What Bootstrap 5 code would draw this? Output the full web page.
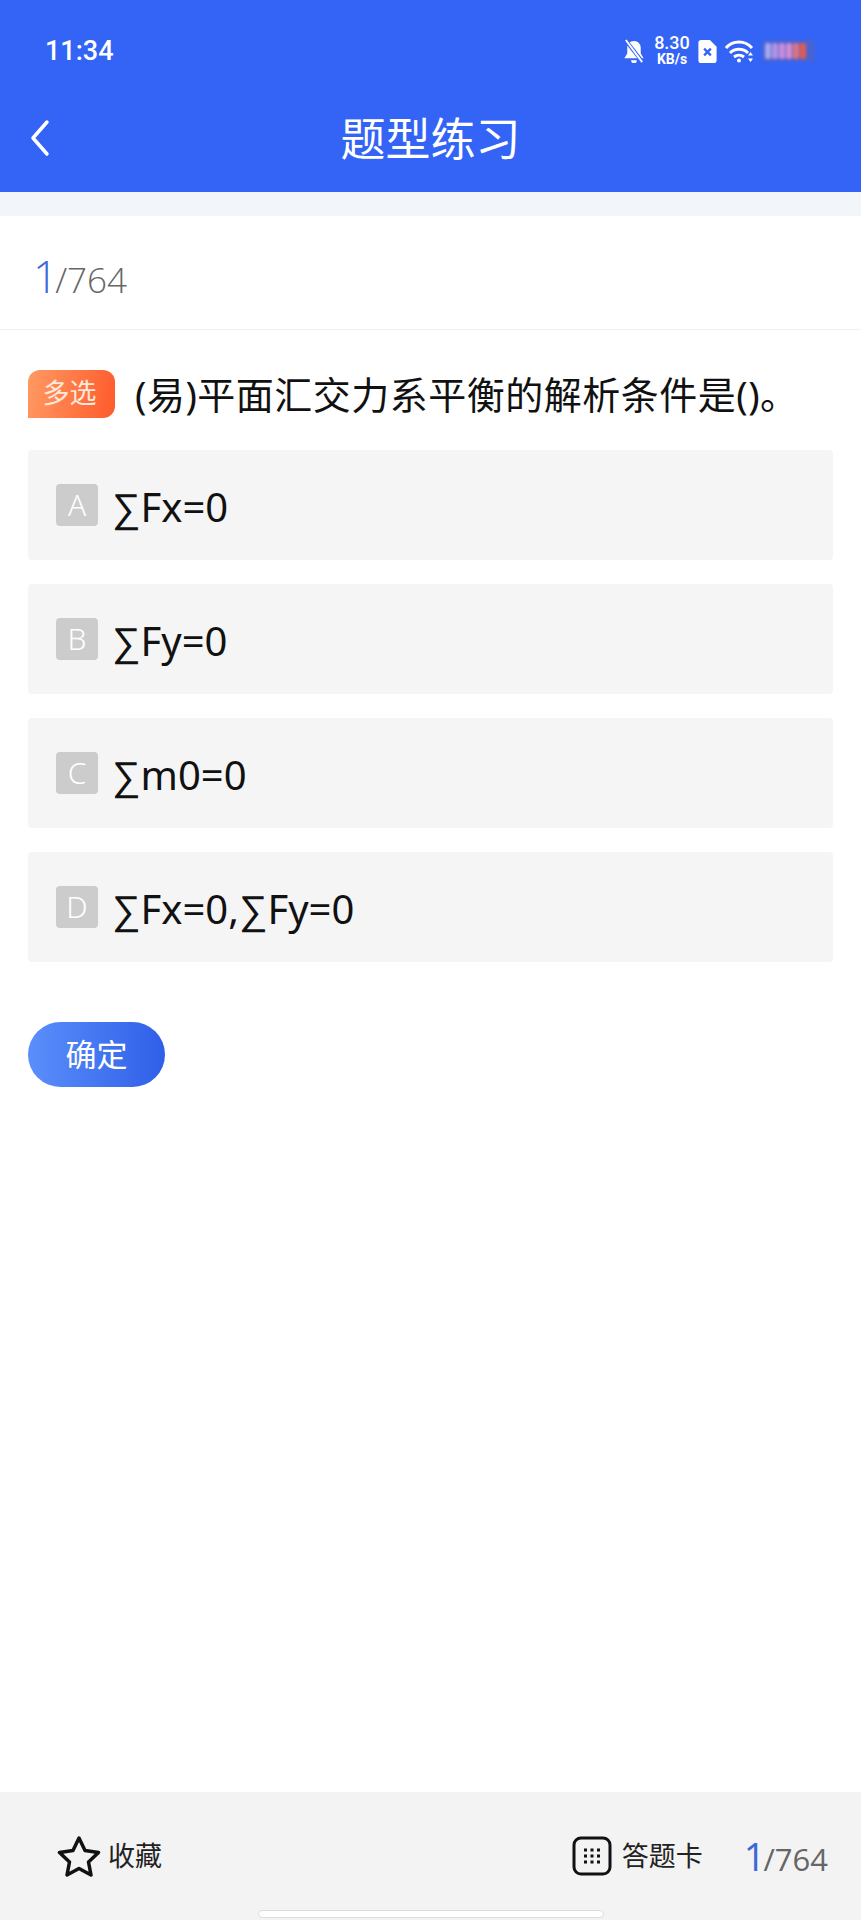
<!DOCTYPE html>
<html lang="zh-CN">
<head>
    <meta charset="UTF-8">
    <meta name="viewport" content="width=device-width, initial-scale=1.0">
    <title>题型练习</title>
    <link href="https://cdn.jsdelivr.net/npm/bootstrap@5.3.0/dist/css/bootstrap.min.css" rel="stylesheet">
    <style>
        body { font-family: "Noto Sans", "Noto Sans CJK SC", sans-serif; background: #fff; }
        .screen { height: 1920px; width: 861px; overflow: hidden; }
        .app-head { background: #3364f6; height: 192px; color: #fff; }
        .status-row { height: 100px; padding: 2px 46px 0 45px; }
        .clock { font-family: Roboto, sans-serif; font-size: 27px; font-weight: 500; }
        .status-icons { gap: 8px; }
        .speed { font-family: Roboto, sans-serif; font-size: 18px; font-weight: 500; line-height: 16px; text-align: center; width: 36px; }
        .speed small { display: block; font-size: 14px; font-weight: 700; white-space: nowrap; }
        .batt { width: 53px; height: 22px; border-radius: 5px; background: #4a63d4; filter: blur(1.5px); gap: 1px; padding: 3px 9px 3px 3px; }
        .batt i { flex: 1; border-radius: 2px; }
        .title-row { height: 92px; padding-bottom: 16px; }
        .back-btn { position: absolute; left: 28px; top: 19px; }
        .title-text { font-size: 45px; line-height: 1; }
        .strip { height: 24px; background: #f2f5f9; }
        .count-row { height: 114px; padding-left: 33px; border-bottom: 1px solid #f2f2f2; color: #666; font-family: "Open Sans", sans-serif; font-size: 35px; font-weight: 300; padding-top: 6px; }
        .count-now { color: #3a68d8; font-size: 44px; margin-right: -3px; }
        .q-row { padding: 40px 28px 0; height: 120px; }
        .q-tag { width: 87px; height: 48px; flex: none; border-radius: 12px 12px 12px 0; background: linear-gradient(100deg, #ff9a63, #ff5a2b); color: #ffe9dc; font-size: 27px; line-height: 46px; text-align: center; padding-right: 4px; }
        .q-text { font-size: 38px; line-height: 48px; letter-spacing: .5px; color: #111; margin-left: 20px; white-space: nowrap; }
        .opt-list { padding: 0 28px; gap: 24px; }
        .opt-row { height: 110px; background: #f5f5f6; border-radius: 4px; padding-left: 28px; padding-top: 34px; }
        .opt-key { width: 42px; height: 42px; border-radius: 4px; background: #cccccd; color: #fff; font-size: 30px; font-weight: 300; line-height: 42px; text-align: center; flex: none; }
        .opt-text { font-family: "Noto Sans", "Liberation Sans", sans-serif; font-size: 40px; line-height: 42px; color: #111; margin-left: 14px; padding-top: 2px; }
        .ok-btn { width: 137px; height: 65px; border: 0; border-radius: 33px; margin: 60px 0 0 28px; background: linear-gradient(90deg, #5a8ffb, #2f5fe8); color: #fff; font-size: 31px; padding: 0; }
        .foot { height: 128px; background: #f3f3f3; padding: 0 33px 0 57px; color: #222; font-size: 27px; margin-top: auto; position: relative; }
        .foot-gap { gap: 7px; }
        .card-label { margin: 0 41px 0 10px; }
        .foot-count { color: #666; font-family: "Open Sans", sans-serif; font-size: 31px; font-weight: 400; }
        .foot-count b { color: #3a68d8; font-size: 38px; font-weight: 400; margin-right: -2px; }
        .home-bar { position: absolute; left: 258px; top: 118px; width: 346px; height: 8px; background: #fff; border: 1px solid #ddd; border-radius: 4px; }
    </style>
</head>
<body>
<div class="screen d-flex flex-column">

    <header class="app-head">
        <div class="status-row d-flex align-items-center justify-content-between">
            <span class="clock">11:34</span>
            <div class="status-icons d-flex align-items-center">
                <svg width="24" height="25" viewBox="0 0 22 26" fill="#fff">
                    <path d="M11 2c4 0 7 3 7 7v6l3 5H1l3-5V9c0-4 3-7 7-7zM8 22h6a3 3 0 0 1-6 0z"/>
                    <path d="M2 1l18 23" stroke="#3364f6" stroke-width="4"/>
                    <path d="M2.500 1l17 23" stroke="#fff" stroke-width="2"/>
                </svg>
                <div class="speed">8.30<small>KB/s</small></div>
                <svg width="19" height="23" viewBox="0 0 19 24">
                    <path d="M3 0h9l7 7v14a3 3 0 0 1-3 3H3a3 3 0 0 1-3-3V3a3 3 0 0 1 3-3z" fill="#fff"/>
                    <path d="M6 9l7 7M13 9l-7 7" stroke="#3364f6" stroke-width="2.500"/>
                </svg>
                <svg width="29" height="23" viewBox="0 0 29 23" fill="none" stroke="#fff" stroke-width="3">
                    <path d="M1 8c7-8 19-8 26 0M5 13c5-5 13-5 18 0M9 17c3-2.500 7-2.500 10 0"/>
                    <circle cx="14" cy="20.500" r="2" fill="#fff" stroke="none"/>
                    <path d="M25.500 12l-2.500 3.500h5zM25.500 22l-2.500-3.500h5z" fill="#fff" stroke="none"/>
                </svg>
                <div class="batt d-flex">
                    <i style="background:#a6a9ec"></i>
                    <i style="background:#b593e2"></i>
                    <i style="background:#c78fdc"></i>
                    <i style="background:#d48dd0"></i>
                    <i style="background:#e2727e"></i>
                    <i style="background:#e25c50"></i>
                </div>
            </div>
        </div>
        <div class="title-row position-relative d-flex align-items-center justify-content-center">
            <svg class="back-btn" width="24" height="38" viewBox="0 0 24 38" fill="none" stroke="#fff" stroke-width="3.500" stroke-linecap="round" stroke-linejoin="round">
                <path d="M19 3L5 19l14 16"/>
            </svg>
            <span class="title-text">题型练习</span>
        </div>
    </header>

    <div class="strip"></div>

    <div class="count-row d-flex align-items-center"><span><span class="count-now">1</span>/764</span></div>

    <div class="q-row d-flex align-items-start">
        <span class="q-tag">多选</span>
        <span class="q-text">(易)平面汇交力系平衡的解析条件是()。</span>
    </div>

    <div class="opt-list d-flex flex-column">
        <div class="opt-row d-flex align-items-start"><span class="opt-key">A</span><span class="opt-text">∑Fx=0</span></div>
        <div class="opt-row d-flex align-items-start"><span class="opt-key">B</span><span class="opt-text">∑Fy=0</span></div>
        <div class="opt-row d-flex align-items-start"><span class="opt-key">C</span><span class="opt-text">∑m0=0</span></div>
        <div class="opt-row d-flex align-items-start"><span class="opt-key">D</span><span class="opt-text">∑Fx=0,∑Fy=0</span></div>
    </div>

    <div><button type="button" class="btn ok-btn">确定</button></div>

    <footer class="foot d-flex align-items-center justify-content-between">
        <div class="foot-gap d-flex align-items-center">
            <svg width="44" height="42" viewBox="0 0 44 42" fill="none" stroke="#111" stroke-width="3.500" stroke-linejoin="round">
                <path d="M22 3l6 12.500 13.500 2-10 9.500 2.500 13L22 33.500 10 40l2.500-13-10-9.500 13.500-2z"/>
            </svg>
            <span>收藏</span>
        </div>
        <div class="d-flex align-items-center">
            <svg width="40" height="40" viewBox="0 0 40 40" fill="none" stroke="#111" stroke-width="3">
                <rect x="2" y="2" width="36" height="36" rx="7"/>
                <path d="M12 14h17M12 20h17M12 26h17" stroke-dasharray="3 3.500"/>
            </svg>
            <span class="card-label">答题卡</span>
            <span class="foot-count"><b>1</b>/764</span>
        </div>
        <div class="home-bar"></div>
    </footer>
</div>
<script src="https://cdn.jsdelivr.net/npm/bootstrap@5.3.0/dist/js/bootstrap.bundle.min.js"></script>
</body>
</html>
